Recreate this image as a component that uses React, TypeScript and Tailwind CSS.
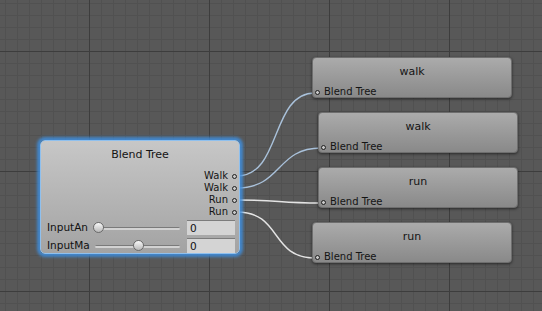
import React from "react";

const FONT = { fontFamily: '"DejaVu Sans", "Liberation Sans", sans-serif' };

type Link = { from: [number, number]; to: [number, number]; color: string };

const links: Link[] = [
    { from: [237, 176], to: [315, 93], color: "#a9c1da" },
    { from: [237, 188], to: [321, 148], color: "#a9c1da" },
    { from: [237, 200], to: [321, 203], color: "#e4e4e4" },
    { from: [237, 212], to: [315, 258], color: "#e4e4e4" },
];

const targets = [
    { name: "walk", x: 312, y: 57 },
    { name: "walk", x: 318, y: 112 },
    { name: "run", x: 318, y: 167 },
    { name: "run", x: 312, y: 222 },
];

function Grid() {
    const minorX: number[] = [];
    const minorY: number[] = [];
    for (let x = 5; x < 542; x += 12) minorX.push(x);
    for (let y = 3; y < 311; y += 12) minorY.push(y);
    const majorX = [89, 209, 329, 449];
    const majorY = [51, 171, 291];
    return (
        <svg className="absolute inset-0" width={542} height={311}>
            {minorX.map((x) => (
                <line key={"x" + x} x1={x + 0.5} y1={0} x2={x + 0.5} y2={311} stroke="#515151" strokeWidth={1} />
            ))}
            {minorY.map((y) => (
                <line key={"y" + y} x1={0} y1={y + 0.5} x2={542} y2={y + 0.5} stroke="#515151" strokeWidth={1} />
            ))}
            {majorX.map((x) => (
                <line key={"mx" + x} x1={x + 0.5} y1={0} x2={x + 0.5} y2={311} stroke="#3d3d3d" strokeWidth={1} />
            ))}
            {majorY.map((y) => (
                <line key={"my" + y} x1={0} y1={y + 0.5} x2={542} y2={y + 0.5} stroke="#3d3d3d" strokeWidth={1} />
            ))}
        </svg>
    );
}

function Links() {
    return (
        <svg className="absolute inset-0" width={542} height={311}>
            {links.map((l, i) => {
                const [x1, y1] = l.from;
                const [x2, y2] = l.to;
                const dx = 45;
                return (
                    <path
                        key={i}
                        d={`M${x1} ${y1} C${x1 + dx} ${y1} ${x2 - dx} ${y2} ${x2} ${y2}`}
                        fill="none"
                        stroke={l.color}
                        strokeWidth={1.4}
                    />
                );
            })}
        </svg>
    );
}

function Port() {
    return <span className="inline-block w-[5px] h-[5px] rounded-full border border-[#1e1e1e] bg-[#c8c8c8] shrink-0" />;
}

function SliderRow({ label, pos }: { label: string; pos: number }) {
    return (
        <div className="flex items-center h-[15px]">
            <div className="w-[46px] whitespace-nowrap text-[10.5px] leading-[15px] text-[#111]">{label}</div>
            <div className="relative flex-1 h-[15px]">
                {/* track */}
                <div className="absolute left-[2px] right-[2px] top-[7px] h-[3px] rounded-full bg-[#d2d2d2] border-t border-[#7a7a7a]" />
                {/* thumb */}
                <div
                    className="absolute top-[2px] w-[11px] h-[11px] rounded-full border border-[#6a6a6a] bg-gradient-to-b from-[#fafafa] to-[#b8b8b8]"
                    style={{ left: `${pos}px` }}
                />
            </div>
            <div className="ml-[5px] w-[48px] h-[15px] bg-[#d4d4d4] border-t border-[#7c7c7c] text-[10.5px] leading-[14px] pl-[3px] text-[#111]">0</div>
        </div>
    );
}

function BlendTreeNode() {
    return (
        <div
            className="absolute left-[40px] top-[140px] w-[200px] h-[114px] rounded-[5px] bg-gradient-to-b from-[#c7c7c7] to-[#a3a3a3] border border-[#8fc0ee] shadow-[0_0_3px_3px_rgba(62,142,222,0.85)]"
            style={FONT}
        >
            <div className="pt-[7px] text-center text-[11px] leading-[13px] text-[#141414]">Blend Tree</div>
            <div className="mt-[9px] flex flex-col items-end pr-[2px]">
                {["Walk", "Walk", "Run", "Run"].map((p, i) => (
                    <div key={i} className="flex items-center gap-[4px] h-[12px] text-[10px] leading-[12px] text-[#141414]">
                        <span>{p}</span>
                        <Port />
                    </div>
                ))}
            </div>
            <div className="mt-[2px] flex flex-col gap-[3px] pl-[6px] pr-[4px]">
                <SliderRow label="InputAn" pos={0} />
                <SliderRow label="InputMa" pos={40} />
            </div>
        </div>
    );
}

function TargetNode({ name, x, y }: { name: string; x: number; y: number }) {
    return (
        <div
            className="absolute w-[200px] h-[41px] rounded-[4px] bg-gradient-to-b from-[#ababab] to-[#898989] border border-[#6e6e6e] shadow-[0_1px_3px_rgba(0,0,0,0.55)]"
            style={{ left: x, top: y, ...FONT }}
        >
            <div className="pt-[7px] text-center text-[11px] leading-[13px] text-[#141414]">{name}</div>
            <div className="mt-[8px] flex items-center gap-[4px] pl-[2px] h-[12px] text-[10px] leading-[12px] text-[#141414]">
                <Port />
                <span>Blend Tree</span>
            </div>
        </div>
    );
}

export default function App() {
    return (
        <div className="relative w-[542px] h-[311px] overflow-hidden bg-[#585858]">
            <Grid />
            <Links />
            <BlendTreeNode />
            {targets.map((t, i) => (
                <TargetNode key={i} {...t} />
            ))}
        </div>
    );
}
